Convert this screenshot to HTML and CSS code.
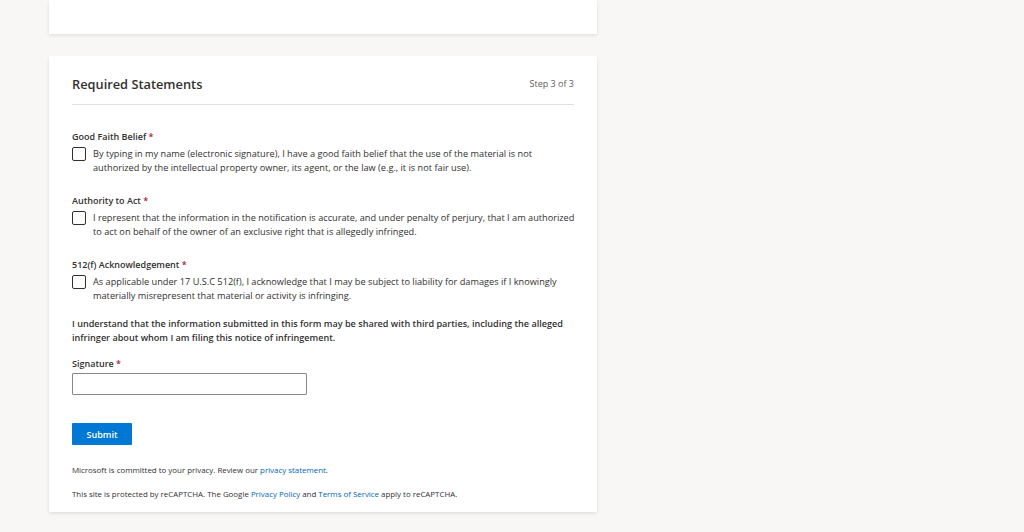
FILE: index.html
```html
<!DOCTYPE html>
<html lang="en">
<head>
  <meta charset="UTF-8">
  <meta name="viewport" content="width=device-width, initial-scale=1.0">
  <title>Report Infringement</title>
  <link rel="stylesheet" href="styles.css">
</head>
<body>
  <div class="page">
    <div class="card card-prev"></div>

    <div class="card">
      <div class="card-header">
        <h2>Required Statements</h2>
        <span class="step">Step 3 of 3</span>
      </div>

      <div class="field">
        <div class="label">Good Faith Belief <span class="req">*</span></div>
        <label class="check">
          <span class="box"></span>
          <span class="check-text">By typing in my name (electronic signature), I have a good faith belief that the use of the material is not authorized by the intellectual property owner, its agent, or the law (e.g., it is not fair use).</span>
        </label>
      </div>

      <div class="field">
        <div class="label">Authority to Act <span class="req">*</span></div>
        <label class="check">
          <span class="box"></span>
          <span class="check-text">I represent that the information in the notification is accurate, and under penalty of perjury, that I am authorized to act on behalf of the owner of an exclusive right that is allegedly infringed.</span>
        </label>
      </div>

      <div class="field">
        <div class="label">512(f) Acknowledgement <span class="req">*</span></div>
        <label class="check">
          <span class="box"></span>
          <span class="check-text">As applicable under 17 U.S.C 512(f), I acknowledge that I may be subject to liability for damages if I knowingly materially misrepresent that material or activity is infringing.</span>
        </label>
      </div>

      <p class="notice">I understand that the information submitted in this form may be shared with third parties, including the alleged infringer about whom I am filing this notice of infringement.</p>

      <div class="field signature">
        <div class="label">Signature <span class="req">*</span></div>
        <input type="text" class="text-input">
      </div>

      <button class="submit">Submit</button>

      <p class="small">Microsoft is committed to your privacy. Review our <a href="#">privacy statement</a>.</p>
      <p class="small">This site is protected by reCAPTCHA. The Google <a href="#">Privacy Policy</a> and <a href="#">Terms of Service</a> apply to reCAPTCHA.</p>
    </div>
  </div>
</body>
</html>
```

FILE: styles.css
```css
body {
  margin: 0;
  padding: 0;
  background-color: #f8f7f6;
  font-family: "Open Sans", "Noto Sans", sans-serif;
  color: #323130;
}

.page {
  width: 548px;
  margin-left: 49px;
  padding-bottom: 20px;
}

.card {
  background-color: #fff;
  box-shadow: 0 1.6px 3.6px rgba(0, 0, 0, 0.1), 0 0.3px 0.9px rgba(0, 0, 0, 0.08);
  padding: 12px 23px 12px;
  margin-bottom: 22px;
}

.card-prev {
  height: 34px;
  padding: 0;
}

.card-header {
  display: flex;
  justify-content: space-between;
  align-items: center;
  height: 31px;
  padding-bottom: 5px;
  border-bottom: 1px solid #e1dfdd;
  margin-bottom: 25px;
}

.card-header h2 {
  margin: 0;
  font-size: 12.8px;
  font-weight: 600;
  color: #323130;
}

.step {
  font-size: 9px;
  color: #605e5c;
}

.field {
  margin-bottom: 20px;
}

.label {
  font-size: 9px;
  font-weight: 600;
  line-height: 13px;
  margin-bottom: 3px;
}

.req {
  color: #a4262c;
}

.check {
  display: flex;
  align-items: flex-start;
  gap: 7px;
  margin-right: -5px;
}

.box {
  flex: none;
  width: 12px;
  height: 12px;
  border: 1px solid #323130;
  border-radius: 2px;
  margin-top: 1px;
}

.check-text {
  font-size: 9.2px;
  line-height: 13.5px;
  padding-top: 1px;
}

.notice {
  margin: -5px 0 12px;
  font-size: 9.1px;
  font-weight: 600;
  line-height: 14px;
}

.signature {
  margin-bottom: 28px;
}

.text-input {
  display: block;
  box-sizing: border-box;
  width: 235px;
  height: 22px;
  margin: 0;
  border: 1px solid #8a8886;
  border-radius: 1px;
}

.submit {
  display: block;
  width: 60px;
  height: 22px;
  padding: 0;
  border: none;
  border-radius: 1px;
  background-color: #0078d4;
  color: #fff;
  font-family: inherit;
  font-size: 9px;
  font-weight: 600;
  margin-bottom: 20px;
}

.small {
  margin: 0 0 13px;
  font-size: 7.9px;
  line-height: 11px;
  color: #323130;
}

.small:last-child {
  margin-bottom: 0;
}

.small a {
  color: #0067b8;
  text-decoration: none;
}
```
